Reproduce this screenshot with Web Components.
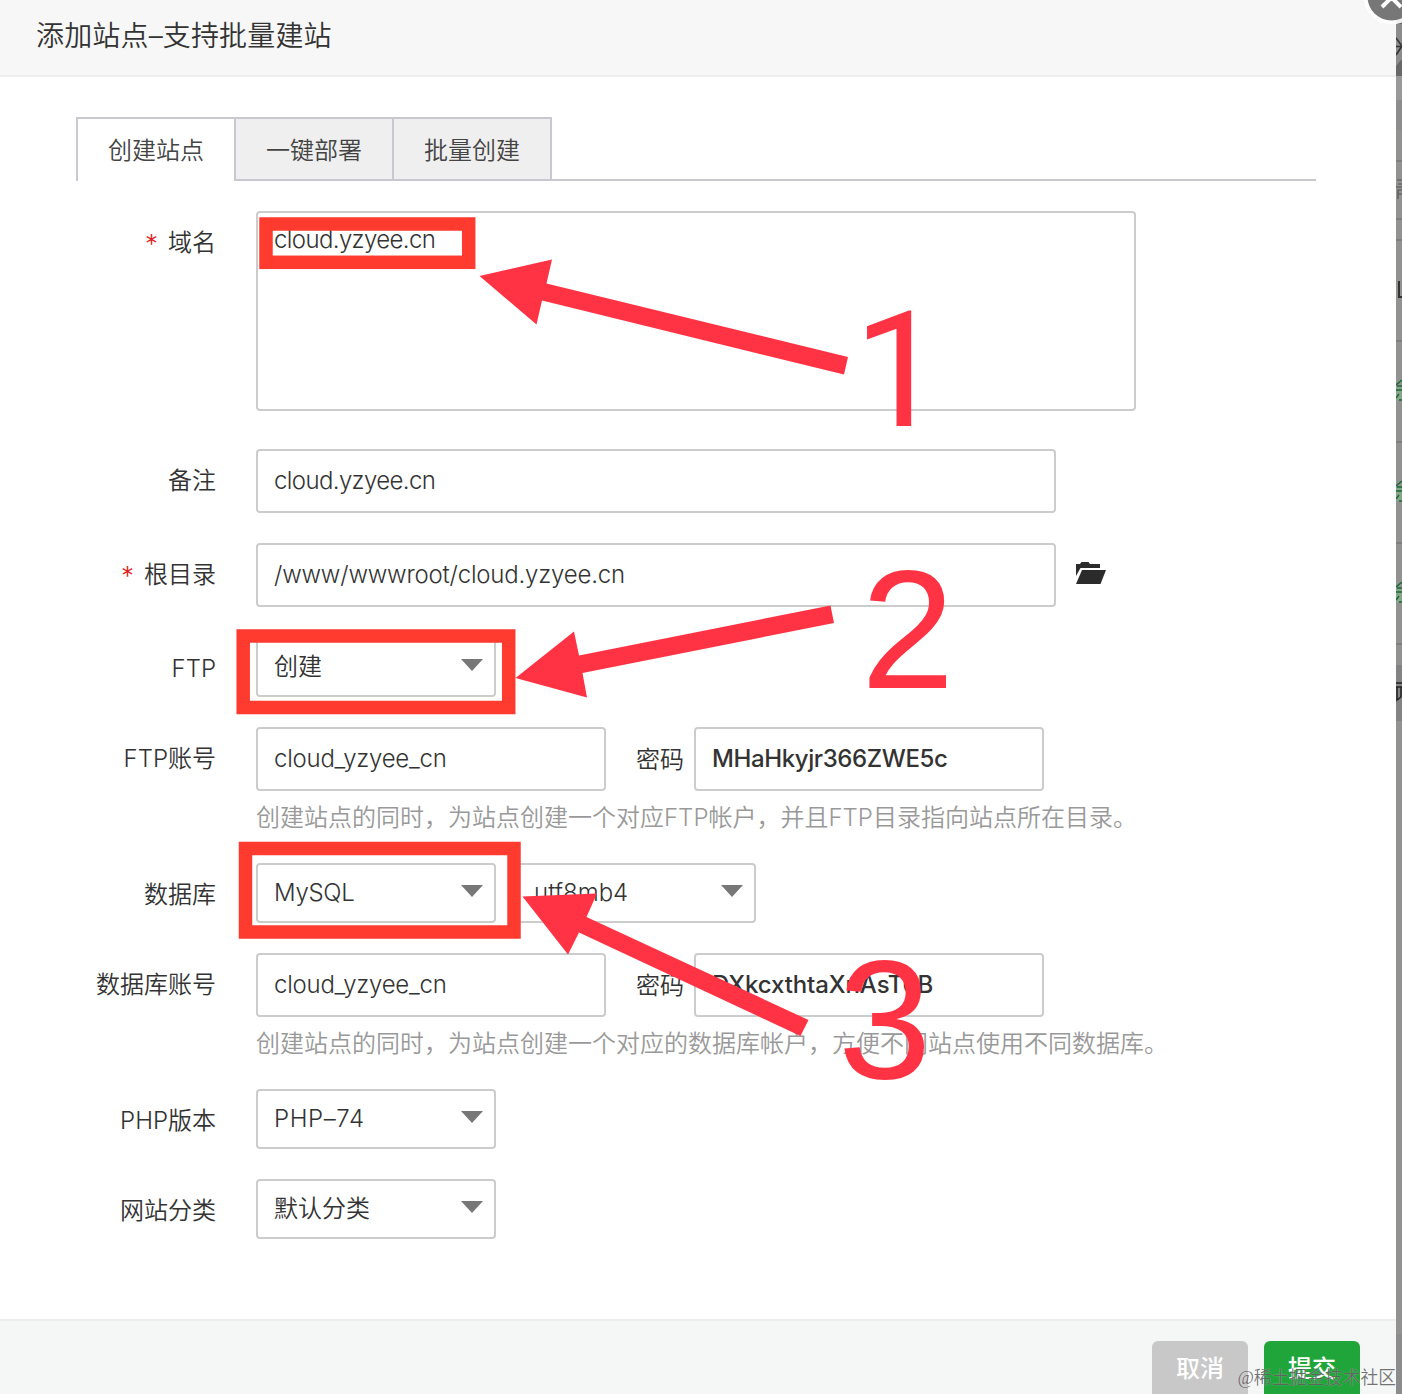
<!DOCTYPE html>
<html lang="zh-CN">
<head>
<meta charset="UTF-8">
<title>添加站点</title>
<style>
    body {
        margin: 0;
        width: 1402px;
        height: 1394px;
        overflow: hidden;
        position: relative;
        background: #929291;
        color: #333;
        font: 350 24px/34px Inter, "Noto Sans CJK SC", sans-serif;
    }
</style>
</head>
<body>
<page-behind></page-behind>
<site-dialog heading="添加站点–支持批量建站">
    <tab-bar slot="tabs">
        <tab-item active>创建站点</tab-item>
        <tab-item>一键部署</tab-item>
        <tab-item>批量创建</tab-item>
    </tab-bar>

    <form-row label="域名" required style="--gap: 38px">
        <text-field class="area" style="--w: 880px; --h: 200px; --ls: -0.62px">cloud.yzyee.cn</text-field>
    </form-row>
    <form-row label="备注">
        <text-field style="--w: 800px; --ls: -0.62px">cloud.yzyee.cn</text-field>
    </form-row>
    <form-row label="根目录" required>
        <text-field style="--w: 800px; --ls: -0.2px">/www/wwwroot/cloud.yzyee.cn</text-field>
        <folder-icon></folder-icon>
    </form-row>
    <form-row label="FTP">
        <select-box>创建</select-box>
    </form-row>
    <form-row label="FTP账号" hint="创建站点的同时，为站点创建一个对应FTP帐户，并且FTP目录指向站点所在目录。">
        <text-field style="--ls: -0.25px">cloud_yzyee_cn</text-field>
        <field-note>密码</field-note>
        <text-field strong style="--ls: -0.4px">MHaHkyjr366ZWE5c</text-field>
    </form-row>
    <form-row label="数据库">
        <select-box style="--ls: -0.3px">MySQL</select-box>
        <select-box style="margin-left: 20px">utf8mb4</select-box>
    </form-row>
    <form-row label="数据库账号" hint="创建站点的同时，为站点创建一个对应的数据库帐户，方便不同站点使用不同数据库。">
        <text-field style="--ls: -0.25px">cloud_yzyee_cn</text-field>
        <field-note>密码</field-note>
        <text-field strong style="--ls: -0.1px">DXkcxthtaXnAsT6B</text-field>
    </form-row>
    <form-row label="PHP版本">
        <select-box style="--ls: 0.6px">PHP–74</select-box>
    </form-row>
    <form-row label="网站分类">
        <select-box>默认分类</select-box>
    </form-row>

    <dialog-button slot="actions">取消</dialog-button>
    <dialog-button slot="actions" primary>提交</dialog-button>
</site-dialog>
<mark-layer></mark-layer>
<water-mark>@稀土掘金技术社区</water-mark>

<script>
// Base: clona la plantilla en un shadow root abierto
class Base extends HTMLElement {
    constructor() {
        super();
        this.attachShadow({ mode: 'open' });
        this.shadowRoot.innerHTML = this.render();
    }
    render() { return ''; }
}

class SiteDialog extends Base {
    render() {
        return `
            <style>
                :host {
                    display: flex;
                    flex-direction: column;
                    position: relative;
                    width: 1396px;
                    height: 1394px;
                    background: #fff;
                    overflow: hidden;
                }
                header {
                    box-sizing: border-box;
                    height: 77px;
                    padding: 15px 36px;
                    background: #f7f7f7;
                    border-bottom: 2px solid #eee;
                    font-size: 28px;
                    letter-spacing: 0.16px;
                    line-height: 42px;
                }
                main { flex: 1; padding: 40px 80px 0 76px; }
                footer {
                    box-sizing: border-box;
                    height: 75px;
                    padding: 20px 36px 0;
                    display: flex;
                    justify-content: flex-end;
                    gap: 16px;
                    background: #f5f7f7;
                    border-top: 2px solid #edefef;
                }
            </style>
            <header>${this.getAttribute('heading')}</header>
            <main><slot name="tabs"></slot><slot></slot></main>
            <footer><slot name="actions"></slot></footer>
        `;
    }
}
customElements.define('site-dialog', SiteDialog);

class TabBar extends Base {
    render() {
        return `
            <style>
                :host { display: flex; height: 64px; margin-bottom: 30px; }
                .line { flex: 1; border-bottom: 2px solid #c9c9cd; }
            </style>
            <slot></slot><div class="line"></div>
        `;
    }
}
customElements.define('tab-bar', TabBar);

class TabItem extends Base {
    render() {
        return `
            <style>
                :host {
                    box-sizing: border-box;
                    width: 158px;
                    padding-top: 15px;
                    text-align: center;
                    background: #efefef;
                    border: 2px solid #c8c8d0;
                    border-left: 0;
                    color: #444;
                }
                :host([active]) {
                    width: 160px;
                    background: #fff;
                    border-left: 2px solid #c8c8d0;
                    border-bottom: 0;
                }
            </style>
            <slot></slot>
        `;
    }
}
customElements.define('tab-item', TabItem);

class FormRow extends Base {
    render() {
        const star = this.hasAttribute('required') ? '<i>*</i>' : '';
        const hint = this.getAttribute('hint');
        return `
            <style>
                :host {
                    display: grid;
                    grid-template-columns: 140px 1fr;
                    column-gap: 40px;
                    margin-bottom: var(--gap, 30px);
                }
                label { text-align: right; padding-top: 15px; white-space: nowrap; justify-self: end; }
                i {
                    display: inline-block;
                    vertical-align: -2px;
                    line-height: 24px;
                    font-style: normal;
                    font-size: 26px;
                    color: #e02020;
                    margin-right: 10px;
                }
                .controls { display: flex; align-items: center; }
                p {
                    grid-column: 2;
                    margin: 10px 0 2px;
                    height: 30px;
                    line-height: 34px;
                    color: #999;
                    white-space: nowrap;
                }
            </style>
            <label>${star}${this.getAttribute('label')}</label>
            <div class="controls"><slot></slot></div>
            ${hint ? `<p>${hint}</p>` : ''}
        `;
    }
}
customElements.define('form-row', FormRow);

class TextField extends Base {
    render() {
        return `
            <style>
                :host {
                    box-sizing: border-box;
                    width: var(--w, 350px);
                    height: var(--h, 64px);
                    padding: 13px 16px 0;
                    border: 2px solid #ccc;
                    border-radius: 4px;
                    background: #fff;
                    letter-spacing: var(--ls, 0);
                }
                :host(.area) { padding-top: 10px; }
                :host([strong]) { font-weight: 500; }
            </style>
            <slot></slot>
        `;
    }
}
customElements.define('text-field', TextField);

class SelectBox extends Base {
    render() {
        return `
            <style>
                :host {
                    box-sizing: border-box;
                    display: flex;
                    justify-content: space-between;
                    width: 240px;
                    height: 60px;
                    padding: 11px 11px 0 16px;
                    border: 2px solid #ccc;
                    border-radius: 4px;
                    background: #fff;
                    letter-spacing: var(--ls, 0);
                }
                svg { margin-top: 9px; }
            </style>
            <span><slot></slot></span>
            <svg width="22" height="12"><path d="M0 0H22L11 12Z" fill="#777"/></svg>
        `;
    }
}
customElements.define('select-box', SelectBox);

class FieldNote extends Base {
    render() {
        return `
            <style>:host { width: 58px; margin: 1px 0 0 30px; }</style>
            <slot></slot>
        `;
    }
}
customElements.define('field-note', FieldNote);

class FolderIcon extends Base {
    render() {
        return `
            <style>:host { display: flex; margin: 0 0 5px 20px; }</style>
            <svg width="30" height="22" fill="#2b2b2b">
                <path d="M0 13V2H4L5.500 0H12.500L14 2H24V6H4.500L0 14Z"/>
                <path d="M6 8H30L24.500 22H0Z"/>
            </svg>
        `;
    }
}
customElements.define('folder-icon', FolderIcon);

class DialogButton extends Base {
    render() {
        return `
            <style>
                :host {
                    box-sizing: border-box;
                    width: 96px;
                    height: 60px;
                    padding-top: 11px;
                    border-radius: 6px;
                    text-align: center;
                    color: #fff;
                    font-weight: 500;
                    background: #c8c8c8;
                }
                :host([primary]) { background: #20a53a; }
            </style>
            <slot></slot>
        `;
    }
}
customElements.define('dialog-button', DialogButton);

// Franja de la página que queda detrás del diálogo
class PageBehind extends Base {
    render() {
        const lines = [161, 219, 240, 341, 442, 543, 644]
            .map(y => `<path d="M0 ${y}H6" stroke="#777" stroke-width="1.500"/>`).join('');
        const links = [390, 491, 592]
            .map(y => `<rect y="${y - 3}" width="6" height="13" fill="#86a58b"/>
                <path d="M0 ${y - 5}L6 ${y - 10}M0 ${y}H6M1 ${y - 4}H6M0 ${y + 8}L3 ${y + 4}M3 ${y + 10}H6" stroke="#1c6a36" stroke-width="1.500"/>`).join('');
        return `
            <style>:host { position: absolute; right: 0; top: 0; width: 6px; height: 1394px; }</style>
            <svg width="6" height="1394" fill="none">
                <rect width="6" height="76" fill="#686868"/>
                <path d="M0 24H6V59L0 66Z" fill="#8c8c8c"/>
                <path d="M0 38L6 46L0 55M0 46.500H6" stroke="#333" stroke-width="1.600"/>
                <rect y="76" width="6" height="24" fill="#999"/>
                <rect y="100" width="6" height="30" fill="#8d8d8d"/>
                <rect y="665" width="6" height="56" fill="#838383"/>
                <rect y="1334" width="6" height="60" fill="#8c8c8c"/>
                ${lines}
                <path d="M1 180H6M2 184H6M0 187H6M2 199V190H6M2 194H6" stroke="#555" stroke-width="1.200"/>
                <path d="M3 281V297H6" stroke="#333" stroke-width="2"/>
                ${links}
                <path d="M0 683H6M0 687H6M1 687V700L5 697M5 687V697" stroke="#222" stroke-width="1.500"/>
            </svg>
        `;
    }
}
customElements.define('page-behind', PageBehind);

// Marcos, flechas y números rojos sobre el formulario, y el botón de cerrar
class MarkLayer extends Base {
    render() {
        return `
            <style>
                :host { position: absolute; left: 0; top: 0; width: 1402px; height: 1394px; }
                text { font-family: "Liberation Sans", sans-serif; font-weight: 400; font-size: 168px; }
                .one { font-family: Roboto, sans-serif; font-size: 162px; }
            </style>
            <svg width="1402" height="1394" viewBox="0 0 1402 1394">
                <g fill="none" stroke="#ff3b30" stroke-width="13.500">
                    <rect x="266" y="224" width="202.700" height="38.300"/>
                    <rect x="243.200" y="636" width="265.500" height="71.500"/>
                    <rect x="245.500" y="848.500" width="268.500" height="83.500"/>
                </g>
                <g fill="#ff3344">
                    <path d="M479.500 276L552 259.500L546.500 283.500L848 357L844 374.500L542 300.500L536.500 324.500Z"/>
                    <path d="M515.500 678L574 631.500L579 655.500L830.500 605.500L834 623L582.500 673L587 697.500Z"/>
                    <path d="M522.500 896.500L597 893.500L586.500 917L808.500 1020L800.500 1036L579 932.500L568 954.500Z"/>
                    <text class="one" x="853.500" y="426">1</text>
                    <text x="861" y="688">2</text>
                    <text x="838" y="1078">3</text>
                </g>
                <circle cx="1391.500" cy="-3.500" r="28" fill="#fff" opacity="0.900"/>
                <circle cx="1391.500" cy="-3.500" r="24" fill="#777"/>
                <path d="M1382 7L1401 -12M1401 7L1382 -12" stroke="#fff" stroke-width="4"/>
            </svg>
        `;
    }
}
customElements.define('mark-layer', MarkLayer);

class WaterMark extends Base {
    render() {
        return `
            <style>
                :host {
                    position: absolute;
                    right: 6px;
                    top: 1365px;
                    font: 350 17.8px/26px "Liberation Serif", "Noto Sans CJK SC", serif;
                    color: rgba(70, 70, 70, 0.75);
                    text-shadow: 0 0 1px rgba(255, 255, 255, 0.6);
                    white-space: nowrap;
                }
            </style>
            <slot></slot>
        `;
    }
}
customElements.define('water-mark', WaterMark);
</script>
</body>
</html>
